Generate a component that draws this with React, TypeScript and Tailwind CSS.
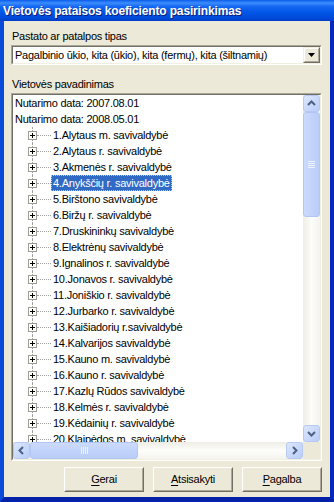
import React from 'react';

const municipalities = [
  '1.Alytaus m. savivaldybė',
  '2.Alytaus r. savivaldybė',
  '3.Akmenės r. savivaldybė',
  '4.Anykščių r. savivaldybė',
  '5.Birštono savivaldybė',
  '6.Biržų r. savivaldybė',
  '7.Druskininkų savivaldybė',
  '8.Elektrėnų savivaldybė',
  '9.Ignalinos r. savivaldybė',
  '10.Jonavos r. savivaldybė',
  '11.Joniškio r. savivaldybė',
  '12.Jurbarko r. savivaldybė',
  '13.Kaišiadorių r.savivaldybė',
  '14.Kalvarijos savivaldybė',
  '15.Kauno m. savivaldybė',
  '16.Kauno r. savivaldybė',
  '17.Kazlų Rūdos savivaldybė',
  '18.Kelmės r. savivaldybė',
  '19.Kėdainių r. savivaldybė',
  '20.Klaipėdos m. savivaldybė',
];

function Chevron({ dir }: { dir: 'up' | 'down' | 'left' | 'right' }) {
  const points = {
    up: '5,10 8.5,6.5 12,10',
    down: '5,7 8.5,10.5 12,7',
    left: '10,5 6.5,8.5 10,12',
    right: '7,5 10.5,8.5 7,12',
  }[dir];
  return (
    <svg width="15" height="15" viewBox="1 1 15 15" className="block">
      <polyline points={points} fill="none" stroke="#4D6185" strokeWidth="2" />
    </svg>
  );
}

function ScrollButton({ dir }: { dir: 'up' | 'down' | 'left' | 'right' }) {
  return (
    <div className="flex h-[17px] w-[17px] shrink-0 items-center justify-center rounded-[3px] border border-[#B5C9F4] bg-gradient-to-br from-[#DCE7FE] to-[#B9CDF7]">
      <Chevron dir={dir} />
    </div>
  );
}

function TreeRow({ label, selected }: { label: string; selected?: boolean }) {
  return (
    <div className="flex h-[16px] items-center whitespace-nowrap">
      <div className="relative h-[16px] w-[38px] shrink-0">
        <div className="absolute bottom-0 left-[19px] top-0 border-l border-dotted border-[#A0A0A0]" />
        <div className="absolute left-[24px] top-[8px] w-[14px] border-t border-dotted border-[#A0A0A0]" />
        <div className="absolute left-[15px] top-[4px] h-[9px] w-[9px] border border-[#A09E92] bg-white">
          <div className="absolute left-[1px] top-[3px] h-[1px] w-[5px] bg-black" />
          <div className="absolute left-[3px] top-[1px] h-[5px] w-[1px] bg-black" />
        </div>
      </div>
      <span
        className={
          selected
            ? 'border border-dotted border-[#E8C878] bg-[#316AC5] px-[1px] leading-[14px] text-white'
            : 'border border-transparent px-[1px] leading-[14px]'
        }
      >
        {label}
      </span>
    </div>
  );
}

function Sunken({ className, children }: { className?: string; children: React.ReactNode }) {
  return (
    <div className={`border border-b-white border-l-[#ACA899] border-r-white border-t-[#ACA899] ${className ?? ''}`}>
      <div className="flex h-full w-full border border-b-[#F1EFE2] border-l-[#716F64] border-r-[#F1EFE2] border-t-[#716F64]">
        {children}
      </div>
    </div>
  );
}

function DialogButton({ first, rest }: { first: string; rest: string }) {
  return (
    <button className="h-[25px] w-[80px] border border-b-[#716F64] border-l-white border-r-[#716F64] border-t-white bg-[#ECE9D8]">
      <div className="flex h-full w-full items-center justify-center border border-b-[#ACA899] border-l-[#ECE9D8] border-r-[#ACA899] border-t-[#ECE9D8]">
        <span>
          <u className="underline-offset-[2px]">{first}</u>
          {rest}
        </span>
      </div>
    </button>
  );
}

export default function App() {
  return (
    <div className="flex h-[502px] w-[334px] flex-col overflow-hidden font-['Liberation_Sans',Arial,sans-serif] text-[11px] tracking-[-0.25px] text-black">
      {/* Title bar */}
      <div className="flex h-[21px] shrink-0 items-center bg-[linear-gradient(to_bottom,#0B5CEB_0%,#3C8DFC_14%,#1465F2_32%,#0056E6_60%,#0048D8_88%,#003CC4_100%)] pl-[3px]">
        <span className="text-[12px] font-bold tracking-[-0.15px] text-white [text-shadow:1px_1px_0_#0A1E7A]">
          Vietovės pataisos koeficiento pasirinkimas
        </span>
      </div>

      {/* Window body */}
      <div className="flex min-h-0 flex-1 flex-col border-b-[5px] border-l-[4px] border-r-[4px] border-b-[#0021A8] border-l-[#0B4BDA] border-r-[#0529BC] bg-[#ECE9D8] pl-[7px] pr-[8px] pt-[9px]">
        <div className="h-[13px] pl-[1px] leading-[13px]">Pastato ar patalpos tipas</div>

        <Sunken className="mt-[2px] h-[20px]">
          <div className="flex flex-1 items-center bg-white pl-[2px]">
            Pagalbinio ūkio, kita (ūkio), kita (fermų), kita (šiltnamių)
          </div>
          <div className="h-[16px] w-[17px] shrink-0 border border-b-[#716F64] border-l-[#F1EFE2] border-r-[#716F64] border-t-[#F1EFE2] bg-[#ECE9D8]">
            <div className="flex h-full w-full items-center justify-center border border-b-[#ACA899] border-l-white border-r-[#ACA899] border-t-white">
              <svg width="7" height="4" viewBox="0 0 7 4">
                <polygon points="0,0 7,0 3.5,4" fill="#000" />
              </svg>
            </div>
          </div>
        </Sunken>

        <div className="mt-[13px] h-[13px] pl-[1px] leading-[13px]">Vietovės pavadinimas</div>

        <Sunken className="mt-[2px] h-[368px]">
          <div className="flex min-w-0 flex-1 flex-col bg-white">
            <div className="flex min-h-0 flex-1">
              {/* Tree */}
              <div className="min-w-0 flex-1 overflow-hidden">
                <div className="h-[16px] whitespace-nowrap pl-[2px] leading-[16px]">Nutarimo data: 2007.08.01</div>
                <div className="h-[16px] whitespace-nowrap pl-[2px] leading-[16px]">Nutarimo data: 2008.05.01</div>
                {municipalities.map((m, i) => (
                  <TreeRow key={m} label={m} selected={i === 3} />
                ))}
              </div>
              {/* Vertical scrollbar */}
              <div className="flex w-[17px] shrink-0 flex-col bg-gradient-to-r from-[#EEEDE5] via-[#FDFDFA] to-[#F4F3EE]">
                <ScrollButton dir="up" />
                <div className="flex h-[105px] w-[17px] shrink-0 flex-col items-center justify-center gap-[1px] rounded-[3px] border border-[#B1C6F3] bg-gradient-to-r from-[#CBDAFD] to-[#BACDF8]">
                  <div className="h-[1px] w-[7px] bg-[#EEF4FE]" />
                  <div className="h-[1px] w-[7px] bg-[#EEF4FE]" />
                  <div className="h-[1px] w-[7px] bg-[#EEF4FE]" />
                  <div className="h-[1px] w-[7px] bg-[#EEF4FE]" />
                </div>
                <div className="flex-1" />
                <ScrollButton dir="down" />
              </div>
            </div>
            {/* Horizontal scrollbar */}
            <div className="flex h-[17px] shrink-0">
              <div className="flex flex-1 bg-gradient-to-b from-[#EEEDE5] via-[#FDFDFA] to-[#F4F3EE]">
                <ScrollButton dir="left" />
                <div className="flex h-[17px] w-[108px] shrink-0 items-center justify-center gap-[1px] rounded-[3px] border border-[#B1C6F3] bg-gradient-to-b from-[#CBDAFD] to-[#BACDF8]">
                  <div className="h-[7px] w-[1px] bg-[#EEF4FE]" />
                  <div className="h-[7px] w-[1px] bg-[#EEF4FE]" />
                  <div className="h-[7px] w-[1px] bg-[#EEF4FE]" />
                  <div className="h-[7px] w-[1px] bg-[#EEF4FE]" />
                </div>
                <div className="flex-1" />
                <ScrollButton dir="right" />
              </div>
              <div className="w-[17px] shrink-0 bg-[#ECE9D8]" />
            </div>
          </div>
        </Sunken>

        <div className="mt-[6px] flex justify-end gap-[9px]">
          <DialogButton first="G" rest="erai" />
          <DialogButton first="A" rest="tsisakyti" />
          <DialogButton first="P" rest="agalba" />
        </div>
      </div>
    </div>
  );
}
